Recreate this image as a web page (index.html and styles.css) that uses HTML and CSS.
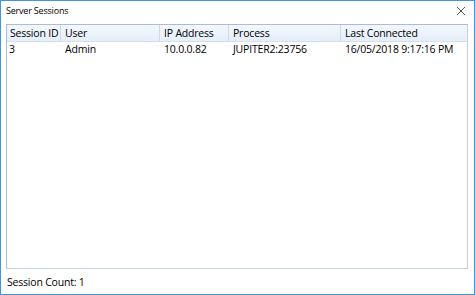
FILE: index.html
```html
<!DOCTYPE html>
<html lang="en">
<head>
  <meta charset="UTF-8" />
  <title>Server Sessions</title>
  <link rel="stylesheet" href="styles.css">
</head>
<body>
  <div class="window" role="dialog" aria-label="Server Sessions">
    <div class="titlebar">
      <span class="title">Server Sessions</span>
      <svg class="close" width="10" height="10" viewBox="0 0 10 10" aria-label="Close">
        <path d="M1 1 L9 9 M9 1 L1 9" stroke="#444" stroke-width="0.9" fill="none" />
      </svg>
    </div>

    <div class="listview">
      <div class="row header">
        <div class="cell">Session ID</div>
        <div class="cell">User</div>
        <div class="cell">IP Address</div>
        <div class="cell">Process</div>
        <div class="cell">Last Connected</div>
      </div>
      <div class="row">
        <div class="cell">3</div>
        <div class="cell">Admin</div>
        <div class="cell">10.0.0.82</div>
        <div class="cell">JUPITER2:23756</div>
        <div class="cell">16/05/2018 9:17:16 PM</div>
      </div>
    </div>

    <div class="status">Session Count: 1</div>
  </div>
</body>
</html>
```

FILE: styles.css
```css
* { margin: 0; padding: 0; box-sizing: border-box; }
body, html {
  height: 100%;
  background: #fff;
  font-family: 'Open Sans', 'Noto Sans', sans-serif;
  color: #000;
  overflow: hidden;
}
.window {
  width: 475px;
  height: 295px;
  border: 1px solid #3f97da;
  background: #fff;
  display: flex;
  flex-direction: column;
  padding: 0 6px 0 5px;
}
.titlebar {
  height: 23px;
  display: flex;
  align-items: center;
  justify-content: space-between;
  padding: 0 0 5px 0;
}
.title {
  font-size: 9px;
  letter-spacing: -0.2px;
}
.close {
  margin-right: 2px;
  margin-top: 1px;
}

.listview {
  flex: 1;
  border: 1px solid #a9bcd8;
  border-right-color: #c5d1e2;
  border-bottom-color: #c5d1e2;
  font-size: 10.5px;
  letter-spacing: -0.2px;
}
.row {
  display: grid;
  grid-template-columns: 54px 99px 69px 112px 1fr;
  height: 14px;
  align-items: center;
}
.row .cell {
  padding-left: 2px;
  white-space: nowrap;
}
.header {
  height: 17px;
  background: linear-gradient(#f4f8fd, #e5eef9);
  border-bottom: 1px solid #d5e0ef;
}
.header .cell {
  height: 100%;
  display: flex;
  align-items: center;
  padding-left: 3px;
  border-right: 1px solid #cdd9e8;
}
.header .cell:last-child {
  border-right: none;
}
.row .cell:nth-child(n+2) {
  padding-left: 4px;
}

.status {
  height: 25px;
  display: flex;
  align-items: center;
  font-size: 10.5px;
  letter-spacing: -0.2px;
  padding-left: 1px;
}
```
